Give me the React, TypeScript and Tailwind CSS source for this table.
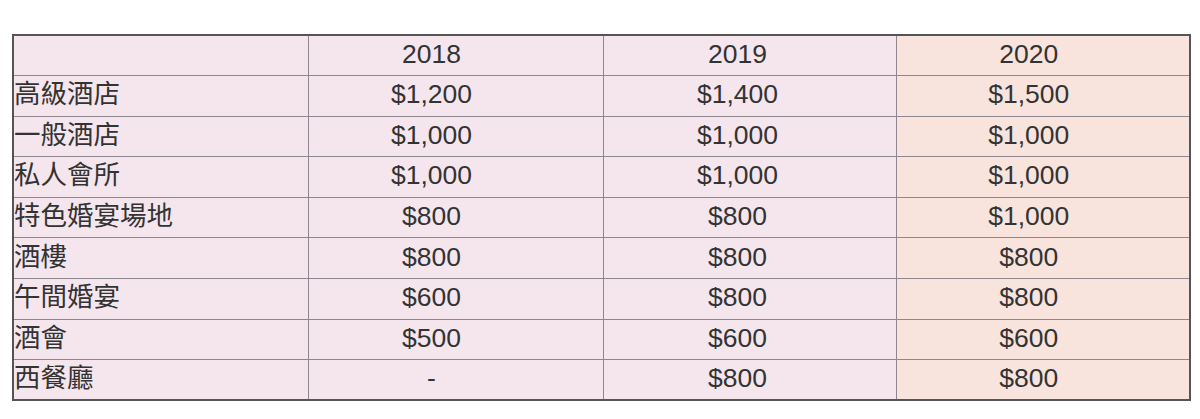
const rows: [string, string, string, string][] = [
  ['高級酒店', '$1,200', '$1,400', '$1,500'],
  ['一般酒店', '$1,000', '$1,000', '$1,000'],
  ['私人會所', '$1,000', '$1,000', '$1,000'],
  ['特色婚宴場地', '$800', '$800', '$1,000'],
  ['酒樓', '$800', '$800', '$800'],
  ['午間婚宴', '$600', '$800', '$800'],
  ['酒會', '$500', '$600', '$600'],
  ['西餐廳', '-', '$800', '$800'],
]

const cell = 'h-[40.6px] border border-[#8f8790] p-0 pb-[3px] align-middle leading-none'

export default function App() {
  return (
    <div className="min-h-[419px] w-[1200px] bg-white pt-[34px] pl-[12px] font-['Liberation_Sans','Noto_Sans_CJK_TC',sans-serif] text-[26.5px] text-[#333]">
      <table className="w-[1177px] table-fixed border-collapse border-2 border-[#555]">
        <colgroup>
          <col className="w-[295px]" />
          <col className="w-[295px]" />
          <col className="w-[293px]" />
          <col className="w-[294px]" />
        </colgroup>
        <thead>
          <tr>
            <th className={`${cell} bg-[#f5e6ee]`}></th>
            <th className={`${cell} bg-[#f5e6ee] pr-[48px] text-center font-normal`}>2018</th>
            <th className={`${cell} bg-[#f5e6ee] pr-[24px] text-center font-normal`}>2019</th>
            <th className={`${cell} bg-[#f8e4dd] pr-[28px] text-center font-normal`}>2020</th>
          </tr>
        </thead>
        <tbody>
          {rows.map((r) => (
            <tr key={r[0]}>
              <td className={`${cell} bg-[#f5e6ee] text-left`}>{r[0]}</td>
              <td className={`${cell} bg-[#f5e6ee] pr-[48px] text-center`}>{r[1]}</td>
              <td className={`${cell} bg-[#f5e6ee] pr-[24px] text-center`}>{r[2]}</td>
              <td className={`${cell} bg-[#f8e4dd] pr-[28px] text-center`}>{r[3]}</td>
            </tr>
          ))}
        </tbody>
      </table>
    </div>
  )
}
